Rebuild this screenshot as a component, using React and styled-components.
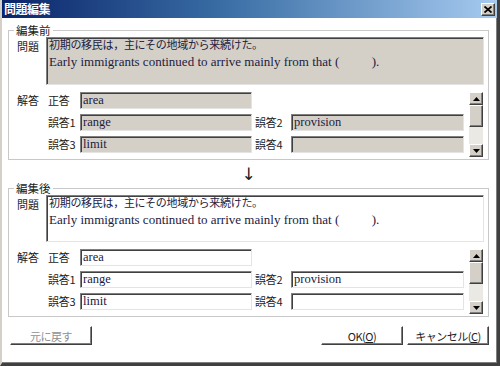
import React from "react";
import styled, { createGlobalStyle } from "styled-components";

const GlobalStyle = createGlobalStyle`
  html, body {
    margin: 0;
    padding: 0;
    background: #ffffff;
  }
  * {
    box-sizing: border-box;
  }
`;

const jp = `"Noto Sans CJK JP", "DejaVu Sans", sans-serif`;
const serif = `"Liberation Serif", "Noto Sans CJK JP", serif`;

const raised = `
  background: #d4d0c8;
  border: 1px solid;
  border-color: #ffffff #404040 #404040 #ffffff;
  box-shadow: inset -1px -1px 0 #808080;
`;

const Window = styled.div`
  width: 500px;
  height: 366px;
  display: flex;
  flex-direction: column;
  background: #ffffff;
  border-left: 2px solid #d4d0c8;
  border-right: 3px solid #404040;
  border-bottom: 3px solid #404040;
  box-shadow: inset -1px -1px 0 #808080;
  overflow: hidden;
`;

const TitleBar = styled.div`
  height: 18px;
  flex: none;
  display: flex;
  align-items: center;
  justify-content: space-between;
  padding: 0 2px 0 2px;
  background: linear-gradient(to right, #0a246a 0%, #3a6ea5 45%, #a6caf0 100%);
`;

const Title = styled.span`
  color: #ffffff;
  font-family: ${jp};
  font-weight: 700;
  font-size: 12px;
  line-height: 18px;
  letter-spacing: -0.5px;
`;

const CloseButton = styled.div`
  ${raised}
  width: 14px;
  height: 13px;
  display: flex;
  align-items: center;
  justify-content: center;
`;

const Body = styled.div`
  flex: 1;
  display: flex;
  flex-direction: column;
  padding: 12px 8px 0 6px;
`;

const Group = styled.div`
  position: relative;
  border: 1px solid #c8c8c8;
  box-shadow: inset 1px 1px 0 #ffffff;
  padding: 6px 4px 2px 8px;
  height: ${(p) => p.$h}px;
  display: flex;
  flex-direction: column;
`;

const Legend = styled.span`
  position: absolute;
  top: -8px;
  left: 5px;
  padding: 0 2px;
  background: #ffffff;
  font-family: ${jp};
  font-size: 11.5px;
  line-height: 14px;
  color: #222222;
`;

const QuestionRow = styled.div`
  display: flex;
  height: 48px;
`;

const SideLabel = styled.div`
  width: ${(p) => p.$w}px;
  flex: none;
  font-family: ${jp};
  font-size: 11px;
  line-height: ${(p) => p.$lh || 14}px;
  color: #222222;
  padding-top: ${(p) => p.$top || 0}px;
`;

const QuestionBox = styled.div`
  flex: 1;
  background: ${(p) => (p.$readonly ? "#d4d0c8" : "#ffffff")};
  border: 1px solid;
  border-color: #808080 #e4e4e4 #e4e4e4 #808080;
  box-shadow: inset 1px 1px 0 #404040;
  padding: 0 2px;
  overflow: hidden;
`;

const QuestionText = styled.div`
  margin-top: -2px;
  line-height: 17px;
  color: #1c2040;
  white-space: pre;
`;

const JpLine = styled.div`
  font-family: ${jp};
  font-size: 11px;
  letter-spacing: -0.3px;
`;

const EnLine = styled.div`
  font-family: ${serif};
  font-size: 13px;
`;

const AnswerRow = styled.div`
  display: flex;
  margin-top: 7px;
  height: 65px;
`;

const AnswerGrid = styled.div`
  display: grid;
  grid-template-columns: 32px 172px 39px 173px;
  grid-auto-rows: 17px;
  row-gap: 5px;
  align-items: center;
  height: 65px;
  overflow: hidden;
`;

const FieldLabel = styled.span`
  font-family: ${jp};
  font-size: 11px;
  line-height: 17px;
  color: #222222;
  padding-left: ${(p) => p.$pl || 0}px;
  letter-spacing: -0.3px;
`;

const Field = styled.div`
  height: 17px;
  background: ${(p) => (p.$readonly ? "#d4d0c8" : "#ffffff")};
  border: 1px solid;
  border-color: #808080 #e4e4e4 #e4e4e4 #808080;
  box-shadow: inset 1px 1px 0 #404040;
  padding: 0 2px;
  font-family: ${serif};
  font-size: 12.5px;
  line-height: 15px;
  color: #1c2040;
`;

const ScrollBar = styled.div`
  width: 14px;
  margin-left: 5px;
  height: 65px;
  flex: none;
  display: flex;
  flex-direction: column;
  background: #ebe9e4;
`;

const ScrollButton = styled.div`
  ${raised}
  height: 13px;
  flex: none;
  display: flex;
  align-items: center;
  justify-content: center;
`;

const Thumb = styled.div`
  ${raised}
  height: 22px;
  flex: none;
`;

const Spacer = styled.div`
  flex: 1;
`;

const ArrowRow = styled.div`
  height: 28px;
  display: flex;
  align-items: center;
  justify-content: center;
  font-family: "DejaVu Sans", sans-serif;
  font-size: 17px;
  color: #222222;
`;

const ButtonRow = styled.div`
  display: flex;
  margin-top: 9px;
  gap: 4px;
  padding-left: 2px;
`;

const Button = styled.div`
  ${raised}
  background: #ffffff;
  box-shadow: inset -1px -1px 0 #808080;
  width: 82px;
  height: 19px;
  display: flex;
  align-items: center;
  justify-content: center;
  font-family: ${jp};
  font-size: 11px;
  color: ${(p) => (p.$disabled ? "#909090" : "#222222")};
  letter-spacing: -0.5px;
`;

const ButtonSpacer = styled.div`
  flex: 1;
`;

const U = styled.span`
  text-decoration: underline;
`;

function UpArrow() {
  return (
    <svg width="7" height="4" viewBox="0 0 7 4">
      <path d="M0 4 L3.5 0 L7 4 Z" fill="#000" />
    </svg>
  );
}

function DownArrow() {
  return (
    <svg width="7" height="4" viewBox="0 0 7 4">
      <path d="M0 0 L7 0 L3.5 4 Z" fill="#000" />
    </svg>
  );
}

function Scroller() {
  return (
    <ScrollBar>
      <ScrollButton>
        <UpArrow />
      </ScrollButton>
      <Thumb />
      <Spacer />
      <ScrollButton>
        <DownArrow />
      </ScrollButton>
    </ScrollBar>
  );
}

function EditGroup({ legend, readonly, height }) {
  return (
    <Group $h={height}>
      <Legend>{legend}</Legend>
      <QuestionRow>
        <SideLabel $w={29} $top={2}>
          問題
        </SideLabel>
        <QuestionBox $readonly={readonly}>
          <QuestionText>
            <JpLine>初期の移民は，主にその地域から来続けた。</JpLine>
            <EnLine>
              {"Early immigrants continued to arrive mainly from that (          )."}
            </EnLine>
          </QuestionText>
        </QuestionBox>
      </QuestionRow>
      <AnswerRow>
        <SideLabel $w={31} $lh={17}>
          解答
        </SideLabel>
        <AnswerGrid>
          <FieldLabel>正答</FieldLabel>
          <Field $readonly={readonly}>area</Field>
          <span />
          <span />
          <FieldLabel>誤答1</FieldLabel>
          <Field $readonly={readonly}>range</Field>
          <FieldLabel $pl={3}>誤答2</FieldLabel>
          <Field $readonly={readonly}>provision</Field>
          <FieldLabel>誤答3</FieldLabel>
          <Field $readonly={readonly}>limit</Field>
          <FieldLabel $pl={3}>誤答4</FieldLabel>
          <Field $readonly={readonly} />
        </AnswerGrid>
        <Scroller />
      </AnswerRow>
    </Group>
  );
}

export default function App() {
  return (
    <>
      <GlobalStyle />
      <Window>
        <TitleBar>
          <Title>問題編集</Title>
          <CloseButton>
            <svg width="8" height="7" viewBox="0 0 8 7">
              <path d="M0.5 0.5 L7.5 6.5 M7.5 0.5 L0.5 6.5" stroke="#000" strokeWidth="1.8" />
            </svg>
          </CloseButton>
        </TitleBar>
        <Body>
          <EditGroup legend="編集前" readonly height={130} />
          <ArrowRow>↓</ArrowRow>
          <EditGroup legend="編集後" height={129} />
          <ButtonRow>
            <Button $disabled>元に戻す</Button>
            <ButtonSpacer />
            <Button>
              OK(<U>O</U>)
            </Button>
            <Button>
              キャンセル(<U>C</U>)
            </Button>
          </ButtonRow>
        </Body>
      </Window>
    </>
  );
}
